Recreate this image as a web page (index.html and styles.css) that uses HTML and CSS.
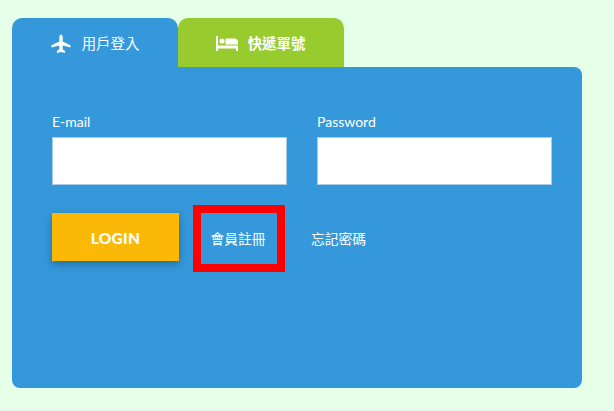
FILE: index.html
```html
<!DOCTYPE html>
<html lang="zh-Hant">
<head>
<meta charset="utf-8">
<title>用戶登入</title>
<link rel="stylesheet" href="styles.css">
</head>
<body>
<div class="card">
  <div class="tabs">
    <a class="tab tab-login">
      <svg class="icon" viewBox="0 0 20 20" width="20" height="20"><path fill="#fff" d="M10 .5c1 0 1.700 1.500 1.700 2.900v4.200l7.800 3.700v2.300l-7.800-2v3.800l2.400 1.700v1.900L10 18l-4.100.9v-1.900l2.400-1.700v-3.800l-7.800 2v-2.300l7.800-3.700V3.400C8.300 2 9 .5 10 .5z"/></svg>
      <span>用戶登入</span>
    </a>
    <a class="tab tab-track">
      <svg class="icon" viewBox="0 0 22 15" width="22" height="15"><path fill="#fff" d="M0 0h2v9.500h20V15h-2v-2.500H2V15H0z"/><circle fill="#fff" cx="6" cy="5" r="2.600"/><path fill="#fff" d="M9.500 2.500H18c2.500 0 4 1.500 4 4v2H9.500z"/></svg>
      <span>快遞單號</span>
    </a>
  </div>
  <div class="panel">
    <div class="fields">
      <label class="field">E-mail<input class="input" type="text"></label>
      <label class="field">Password<input class="input" type="password"></label>
    </div>
    <div class="actions">
      <button class="login" type="button">LOGIN</button>
      <a class="link link-register">會員註冊</a>
      <a class="link link-forgot">忘記密碼</a>
    </div>
  </div>
</div>
</body>
</html>
```
FILE: styles.css
```css
* { box-sizing: border-box; }
html, body { height: 100%; }
body {
  margin: 0;
  padding: 18px 0 0 12px;
  background: #e6ffe9;
  font-family: Lato, "Noto Sans CJK TC", sans-serif;
  color: #fff;
  overflow: hidden;
}
.card { width: 570px; }
.tabs { display: flex; }
.tab {
  width: 166px;
  height: 49px;
  display: flex;
  align-items: center;
  justify-content: center;
  gap: 11px;
  padding-top: 2px;
  border-radius: 10px 10px 0 0;
  font-size: 14.400px;
  line-height: 20px;
}
.tab-login { background: #3498db; }
.tab-track { background: #98cb2d; font-weight: 700; gap: 10px; padding-right: 1px; }
.panel {
  height: 321px;
  padding: 46px 30px 0 40px;
  background: #3498db;
  border-radius: 0 8px 8px 8px;
}
.fields { display: grid; grid-template-columns: 235px 235px; column-gap: 30px; }
.field { display: block; font-size: 14px; line-height: 17px; }
.input {
  display: block;
  width: 100%;
  height: 48px;
  margin-top: 7px;
  background: #fff;
  border: 1px solid #a9cde6;
  border-radius: 0;
  outline: 0;
}
.actions { display: flex; align-items: flex-start; margin-top: 20px; }
.login {
  width: 127px;
  height: 48px;
  margin-top: 8px;
  padding: 2px 0 0;
  background: #fbb806;
  border: 0;
  color: #fff;
  font: 900 15.500px/20px Lato, sans-serif;
  letter-spacing: .3px;
  box-shadow: 0 3px 8px rgba(0, 0, 0, .3);
}
.link { font-size: 13.750px; line-height: 20px; }
.link-register {
  width: 92px;
  height: 67px;
  margin-left: 14px;
  border: 8px solid #ff0000;
  display: flex;
  align-items: center;
  justify-content: center;
  padding-right: 2px;
}
.link-forgot { margin: 24px 0 0 26px; }
```
